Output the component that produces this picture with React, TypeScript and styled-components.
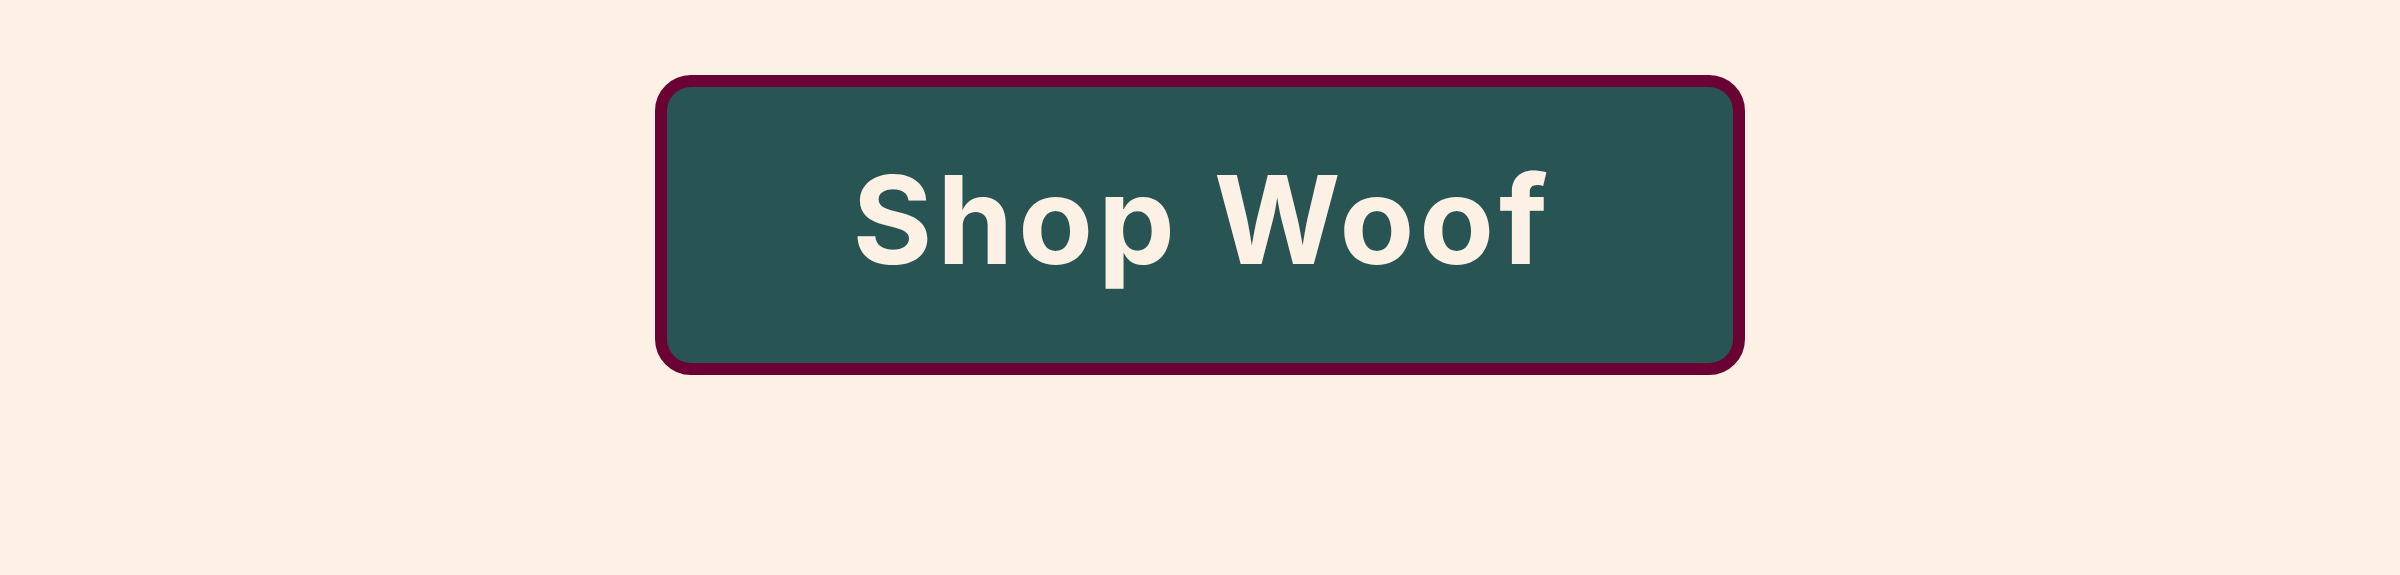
import React from "react";
import styled, { createGlobalStyle } from "styled-components";

const GlobalStyle = createGlobalStyle`
  html, body {
    margin: 0;
    padding: 0;
    background: #fdf0e5;
  }
`;

const Page = styled.main`
  display: flex;
  justify-content: center;
  padding-top: 75px;
  min-height: 575px;
  box-sizing: border-box;
  background: #fdf0e5;
`;

const ShopButton = styled.a`
  display: flex;
  align-items: center;
  justify-content: center;
  box-sizing: border-box;
  width: 1090px;
  height: 300px;
  border: 12px solid #6a0233;
  border-radius: 36px;
  background: #285553;
  color: #fdf0e5;
  font-family: Inter, "Liberation Sans", sans-serif;
  font-weight: 700;
  font-size: 122px;
  line-height: 1;
  text-decoration: none;
  cursor: pointer;
`;

const Label = styled.span`
  position: relative;
  top: -5px;
  letter-spacing: 5px;
  margin-right: -5px;
`;

export default function App() {
  return (
    <>
      <GlobalStyle />
      <Page>
        <ShopButton href="#">
          <Label>Shop Woof</Label>
        </ShopButton>
      </Page>
    </>
  );
}
